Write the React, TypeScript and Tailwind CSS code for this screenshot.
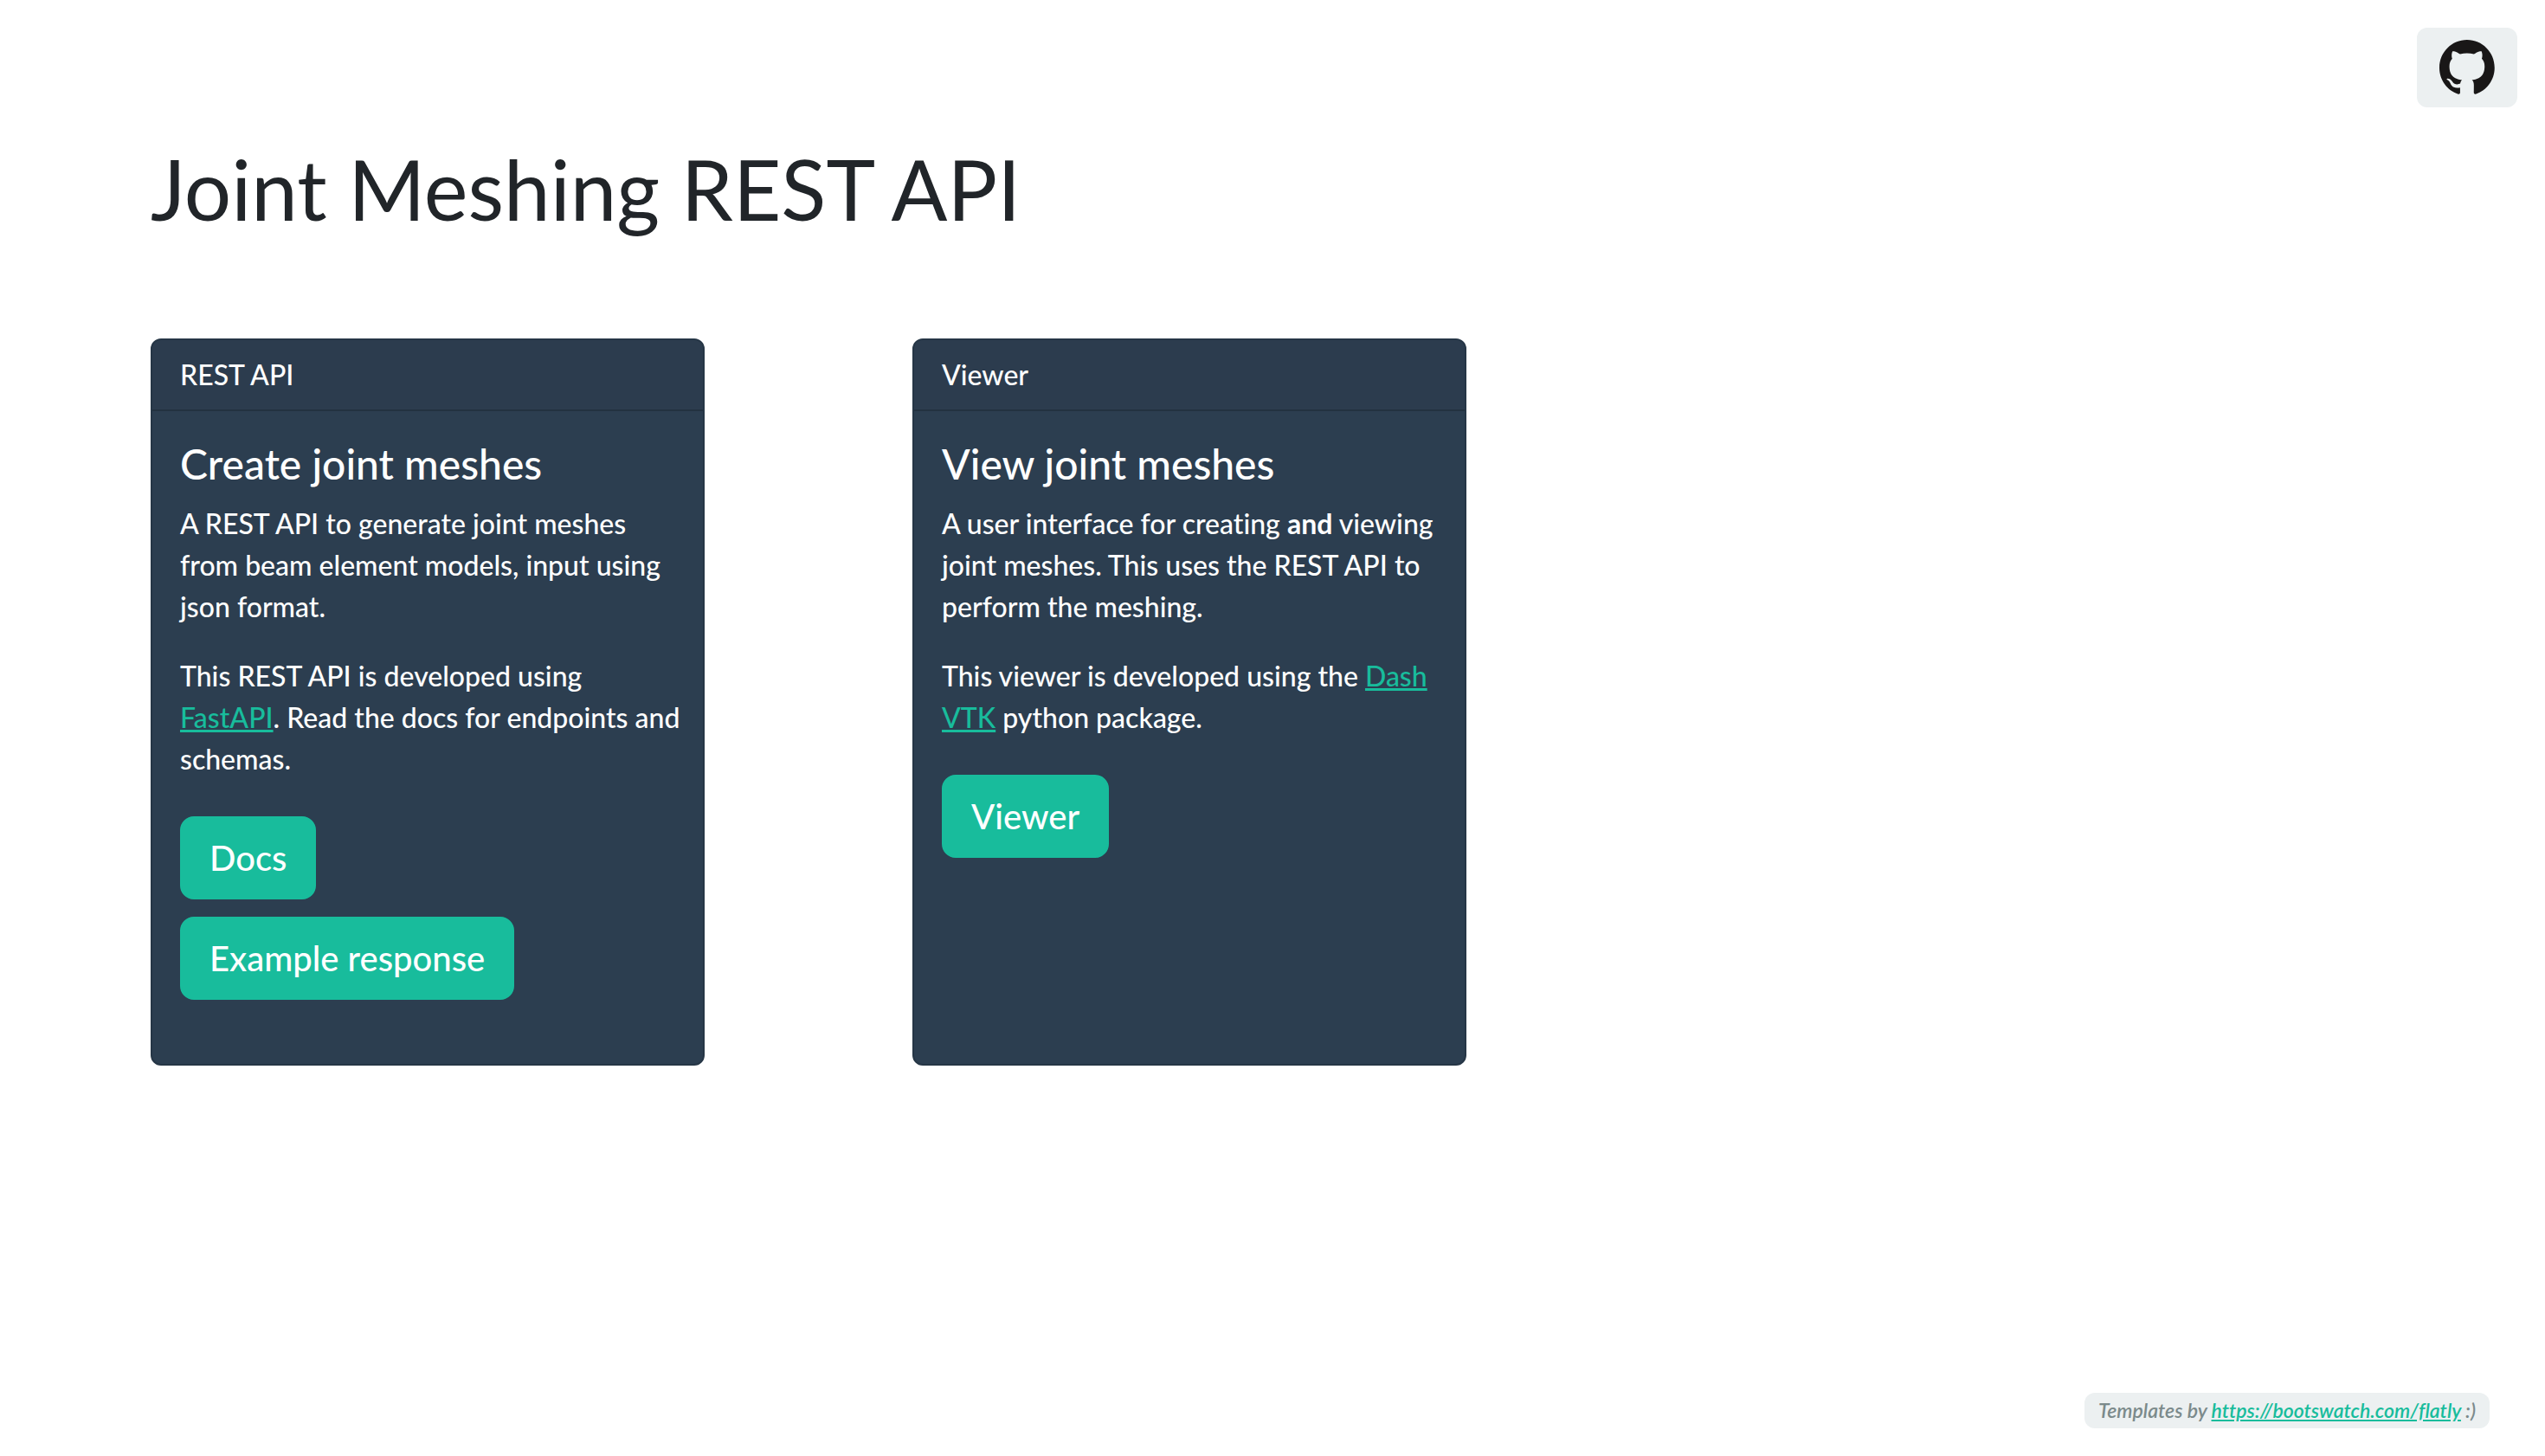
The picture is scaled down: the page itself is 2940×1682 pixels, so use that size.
import type { ReactNode } from "react";

function TextLink({ href, children }: { href: string; children: ReactNode }) {
  return (
    <a href={href} className="text-[#18bc9c] underline">
      {children}
    </a>
  );
}

function ButtonLink({ href, children }: { href: string; children: ReactNode }) {
  return (
    <a
      href={href}
      className="rounded-2xl border-2 border-[#18bc9c] bg-[#18bc9c] px-8 py-4 text-[40px] leading-[60px] text-white"
    >
      {children}
    </a>
  );
}

function Card({
  label,
  title,
  actions,
  children,
}: {
  label: string;
  title: string;
  actions: ReactNode;
  children: ReactNode;
}) {
  return (
    <section className="flex w-full max-w-[640px] flex-col overflow-hidden rounded-xl border-2 border-[#263646] bg-[#2c3e50] text-[32px] leading-[48px] font-medium text-white">
      <header className="border-b-2 border-[#233240] bg-[#2c3c4e] px-8 py-4">{label}</header>
      <div className="flex-1 py-8 pr-4 pl-8">
        <h2 className="mb-4 text-5xl leading-[58px]">{title}</h2>
        <div className="flex flex-col gap-8">{children}</div>
        <div className="mt-[42px] mb-[42px] flex flex-col items-start gap-5">{actions}</div>
      </div>
    </section>
  );
}

export default function App() {
  return (
    <div className="flex min-h-screen flex-col bg-white font-['Lato',sans-serif] text-[#212529] [font-variant-ligatures:no-common-ligatures]">
      <nav className="flex justify-end px-8 pt-8">
        <a
          href="https://github.com"
          aria-label="GitHub"
          className="rounded-xl border-2 border-[#ecf0f1] bg-[#ecf0f1] px-6 py-3 text-[#191717]"
        >
          <svg viewBox="0 0 98 98" className="size-16" fill="currentColor" aria-hidden="true">
            <path
              fillRule="evenodd"
              d="M48.854 0C21.839 0 0 22 0 49.217c0 21.756 13.993 40.172 33.405 46.69 2.427.49 3.316-1.059 3.316-2.362 0-1.141-.08-5.052-.08-9.127-13.59 2.934-16.42-5.867-16.42-5.867-2.184-5.704-5.42-7.17-5.42-7.17-4.448-3.015.324-3.015.324-3.015 4.934.326 7.523 5.052 7.523 5.052 4.367 7.496 11.404 5.378 14.235 4.074.404-3.178 1.699-5.378 3.074-6.6-10.839-1.141-22.243-5.378-22.243-24.283 0-5.378 1.94-9.778 5.014-13.2-.485-1.222-2.184-6.275.486-13.038 0 0 4.125-1.304 13.426 5.052a46.97 46.97 0 0 1 12.214-1.63c4.125 0 8.33.571 12.213 1.63 9.302-6.356 13.427-5.052 13.427-5.052 2.67 6.763.97 11.816.485 13.038 3.155 3.422 5.015 7.822 5.015 13.2 0 18.905-11.404 23.06-22.324 24.283 1.78 1.548 3.316 4.481 3.316 9.126 0 6.6-.08 11.897-.08 13.526 0 1.304.89 2.853 3.316 2.364 19.412-6.52 33.405-24.935 33.405-46.691C97.707 22 75.788 0 48.854 0z"
            />
          </svg>
        </a>
      </nav>

      <main className="flex-1 px-[174px] pt-9">
        <h1 className="text-8xl leading-[115px]">Joint Meshing REST API</h1>
        <div className="mt-[116px] flex flex-wrap gap-x-60 gap-y-12">
          <Card
            label="REST API"
            title="Create joint meshes"
            actions={
              <>
                <ButtonLink href="#docs">Docs</ButtonLink>
                <ButtonLink href="#example">Example response</ButtonLink>
              </>
            }
          >
            <p>A REST API to generate joint meshes from beam element models, input using json format.</p>
            <p>
              This REST API is developed using
              <br />
              <TextLink href="https://fastapi.tiangolo.com">FastAPI</TextLink>. Read the docs for endpoints and
              schemas.
            </p>
          </Card>
          <Card label="Viewer" title="View joint meshes" actions={<ButtonLink href="#viewer">Viewer</ButtonLink>}>
            <p>
              A user interface for creating <strong className="font-bold">and</strong> viewing joint meshes. This uses
              the REST API to perform the meshing.
            </p>
            <p>
              This viewer is developed using the <TextLink href="https://dash.plotly.com/vtk">Dash VTK</TextLink>{" "}
              python package.
            </p>
          </Card>
        </div>
      </main>

      <footer className="flex justify-end px-16 pb-8">
        <p className="rounded-xl bg-[#ecf0f1] px-4 py-2 text-[23px] leading-[25px] font-semibold text-[#7b8a8b] italic">
          Templates by <TextLink href="https://bootswatch.com/flatly">https://bootswatch.com/flatly</TextLink> :)
        </p>
      </footer>
    </div>
  );
}
